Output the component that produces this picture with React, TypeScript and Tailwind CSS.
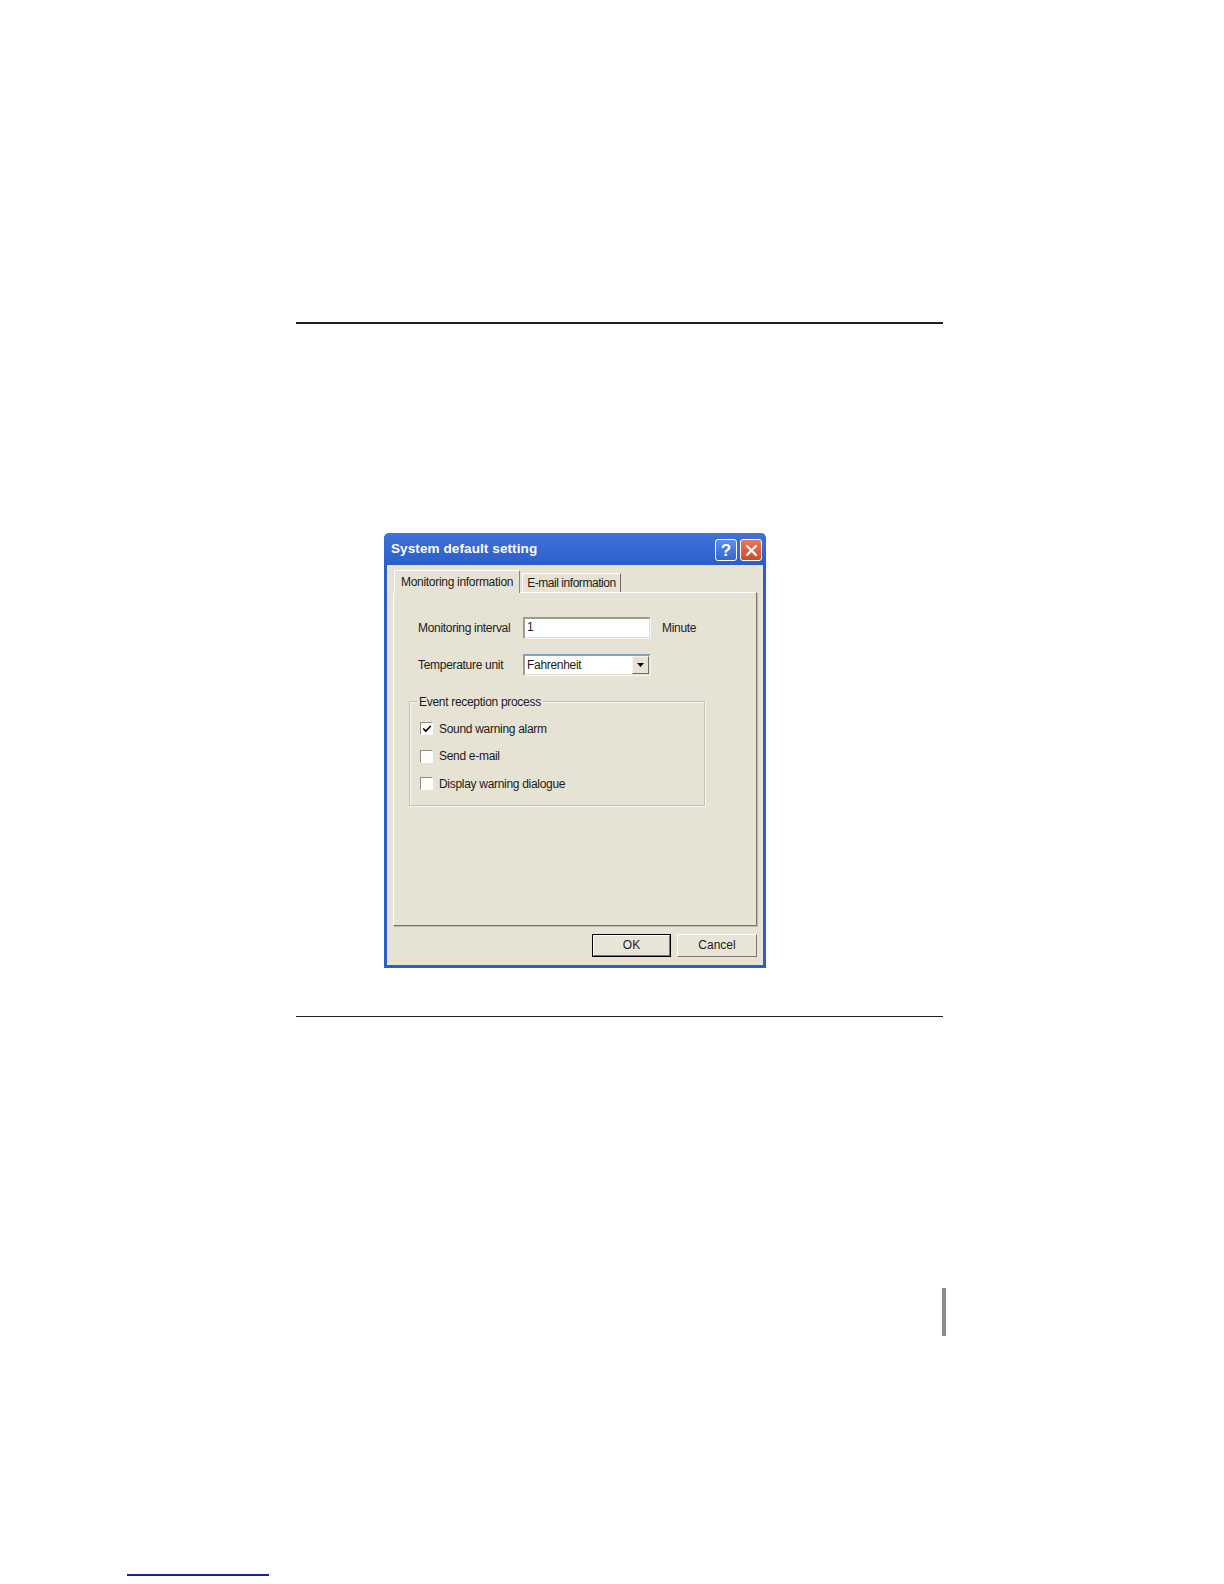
import { Check } from 'lucide-react';

const font = { fontFamily: '"Liberation Sans", Arial, sans-serif' };

function Sunken({ className = '', children }: { className?: string; children?: React.ReactNode }) {
  return (
    <div className={`border border-t-[#7f9db9] border-l-[#7f9db9] border-b-[#f4f4f0] border-r-[#f4f4f0] ${className}`}>
      <div className="h-full w-full border border-t-[#a0a09a] border-l-[#a0a09a] border-b-[#e2dfd0] border-r-[#e2dfd0] bg-white">
        {children}
      </div>
    </div>
  );
}

function CheckBox({ checked, label }: { checked?: boolean; label: string }) {
  return (
    <div className="flex items-center h-[14px] gap-[6px]">
      <div className="w-[13px] h-[13px] border border-t-[#8d8d86] border-l-[#8d8d86] border-b-white border-r-white bg-white flex items-center justify-center">
        {checked && <Check className="w-[10px] h-[10px] text-black" strokeWidth={4} />}
      </div>
      <span className="text-[12px] text-[#1b1b1b] tracking-[-0.3px]">{label}</span>
    </div>
  );
}

function Button({ label, primary }: { label: string; primary?: boolean }) {
  return (
    <div className={`h-[23px] ${primary ? 'w-[79px] border border-black' : 'w-[80px]'}`}>
      <div className="h-full w-full border border-t-white border-l-white border-b-[#77766c] border-r-[#77766c] bg-[#e8e5d6] flex items-center justify-center text-[12px] text-[#1b1b1b]">
        {label}
      </div>
    </div>
  );
}

function Dialog() {
  return (
    <div className="w-[382px] h-[435px] bg-[#2d5fca] rounded-t-[6px] px-[3px] pb-[3px] flex flex-col" style={font}>
      <div className="h-[32px] flex items-center justify-between bg-gradient-to-b from-[#3f73d8] to-[#2c5ec8] rounded-t-[5px] -mx-[3px] pl-[7px] pr-[4px] pt-[2px]">
        <span className="text-white font-bold text-[13.5px] tracking-[0.1px]">System default setting</span>
        <div className="flex gap-[3px] mt-[1px]">
          <div className="w-[22px] h-[22px] rounded-[3px] border border-white bg-gradient-to-b from-[#5e8ee8] to-[#3466d0] flex items-center justify-center text-white font-bold text-[17px] leading-none">
            ?
          </div>
          <div className="w-[22px] h-[22px] rounded-[3px] border border-white bg-gradient-to-b from-[#e9775a] to-[#d04a26] flex items-center justify-center">
            <svg width="13" height="13" viewBox="0 0 13 13">
              <path d="M2 2 L11 11 M11 2 L2 11" stroke="white" strokeWidth="2.4" strokeLinecap="round" />
            </svg>
          </div>
        </div>
      </div>
      <div className="flex-1 bg-[#e6e3d4] pt-[5px] pl-[6px] pr-[6px] flex flex-col">
        <div className="flex items-end h-[22px] pl-[1px]">
          <div className="h-[23px] px-[6px] border border-b-0 border-t-white border-l-white border-r-[#8a897f] bg-[#e6e3d4] relative z-10 -mb-px flex items-center text-[12px] text-[#1b1b1b] tracking-[-0.3px]">
            Monitoring information
          </div>
          <div className="h-[19px] px-[4px] ml-[2px] border border-b-0 border-t-white border-l-white border-r-[#6f6e66] flex items-center text-[12px] text-[#1b1b1b] tracking-[-0.45px]">
            E-mail information
          </div>
        </div>
        <div className="h-[334px] border border-t-white border-l-white border-b-[#77766c] border-r-[#77766c] shadow-[1px_1px_0_#bdbcae] pt-[24px] pl-[24px] text-[12px] text-[#1b1b1b] tracking-[-0.3px]">
          <div className="flex items-center h-[22px]">
            <span className="w-[105px]">Monitoring interval</span>
            <Sunken className="w-[128px] h-[22px]">
              <div className="pl-[2px] leading-[17px]">1</div>
            </Sunken>
            <span className="ml-[11px]">Minute</span>
          </div>
          <div className="flex items-center h-[22px] mt-[15px]">
            <span className="w-[105px]">Temperature unit</span>
            <Sunken className="w-[128px] h-[22px]">
              <div className="flex items-center h-full justify-between">
                <span className="pl-[2px]">Fahrenheit</span>
                <div className="w-[17px] h-full border border-t-[#f4f3ee] border-l-[#f4f3ee] border-b-[#6f6e66] border-r-[#6f6e66] bg-[#e6e3d4] flex items-center justify-center">
                  <svg width="7" height="4" viewBox="0 0 7 4">
                    <path d="M0 0 H7 L3.5 4 Z" fill="black" />
                  </svg>
                </div>
              </div>
            </Sunken>
          </div>
          <fieldset className="mt-[17px] -ml-[9px] w-[296px] h-[113px] border border-[#c3c1b3] shadow-[inset_1px_1px_0_#f7f6f0,1px_1px_0_#f7f6f0] pl-[10px] pt-[11px]">
            <legend className="-ml-[3px] px-[2px] text-[12px]">Event reception process</legend>
            <div className="flex flex-col gap-[13.5px]">
              <CheckBox checked label="Sound warning alarm" />
              <CheckBox label="Send e-mail" />
              <CheckBox label="Display warning dialogue" />
            </div>
          </fieldset>
        </div>
        <div className="flex justify-end gap-[6px] mt-[8px]">
          <Button label="OK" primary />
          <Button label="Cancel" />
        </div>
      </div>
    </div>
  );
}

export default function App() {
  return (
    <div className="w-[1224px] h-[1584px] bg-white overflow-hidden">
      <div className="pt-[322px] pl-[296px]">
        <div className="w-[647px] h-[1.5px] bg-[#231f20]" />
      </div>
      <div className="mt-[209px] ml-[384px]">
        <Dialog />
      </div>
      <div className="mt-[48px] ml-[296px] w-[647px] h-[1.5px] bg-[#231f20]" />
      <div className="mt-[271px] ml-[942px] w-[4px] h-[48px] bg-[#8c8c8c]" />
      <div className="mt-[238px] ml-[127px] w-[142px] h-[1.5px] bg-[#1f2190]" />
    </div>
  );
}
